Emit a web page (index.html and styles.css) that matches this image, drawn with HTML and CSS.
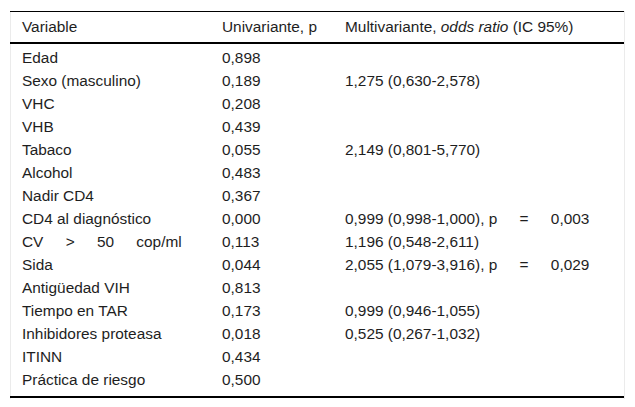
FILE: index.html
```html
<!DOCTYPE html>
<html lang="es">
<head>
<meta charset="utf-8">
<title>Tabla</title>
<link rel="stylesheet" href="styles.css">
</head>
<body>
<div class="wrap">
<table class="tbl">
<thead>
<tr><th>Variable</th><th>Univariante, p</th><th>Multivariante, <em>odds ratio</em> (IC 95%)</th></tr>
</thead>
<tbody>
<tr class="first"><td>Edad</td><td>0,898</td><td></td></tr>
<tr><td>Sexo (masculino)</td><td>0,189</td><td>1,275 (0,630-2,578)</td></tr>
<tr><td>VHC</td><td>0,208</td><td></td></tr>
<tr><td>VHB</td><td>0,439</td><td></td></tr>
<tr><td>Tabaco</td><td>0,055</td><td>2,149 (0,801-5,770)</td></tr>
<tr><td>Alcohol</td><td>0,483</td><td></td></tr>
<tr><td>Nadir CD4</td><td>0,367</td><td></td></tr>
<tr><td>CD4 al diagnóstico</td><td>0,000</td><td>0,999 (0,998-1,000), <span class="wide">p = 0,003</span></td></tr>
<tr><td><span class="wide">CV &gt; 50 cop/ml</span></td><td>0,113</td><td>1,196 (0,548-2,611)</td></tr>
<tr><td>Sida</td><td>0,044</td><td>2,055 (1,079-3,916), <span class="wide">p = 0,029</span></td></tr>
<tr><td>Antigüedad VIH</td><td>0,813</td><td></td></tr>
<tr><td>Tiempo en TAR</td><td>0,173</td><td>0,999 (0,946-1,055)</td></tr>
<tr><td>Inhibidores proteasa</td><td>0,018</td><td>0,525 (0,267-1,032)</td></tr>
<tr><td>ITINN</td><td>0,434</td><td></td></tr>
<tr class="last"><td>Práctica de riesgo</td><td>0,500</td><td></td></tr>
</tbody>
</table>
</div>
</body>
</html>
```

FILE: styles.css
```css
html, body {
  margin: 0;
  padding: 0;
  background: #ffffff;
}
body {
  font-family: "Liberation Sans", Arial, sans-serif;
  font-size: 15.4px;
  color: #1e1e1e;
}
.wrap {
  margin: 11px 10px 0 10px;
  width: 613px;
  border-left: 1px solid #ebebeb;
  border-right: 1px solid #ebebeb;
  padding-bottom: 1px;
}
.tbl {
  width: 614px;
  margin-left: -1px;
  border-collapse: collapse;
  table-layout: fixed;
  border-top: 1px solid #000;
  border-bottom: 2px solid #000;
}
.tbl th {
  font-weight: normal;
  text-align: left;
  height: 30px;
  padding: 0 0 0 12px;
  line-height: 30px;
  border-bottom: 2px solid #000;
  vertical-align: middle;
  white-space: nowrap;
}
.tbl td {
  padding: 0 0 0 12px;
  line-height: 23px;
  height: 23px;
  vertical-align: middle;
  white-space: nowrap;
}
.tbl th:nth-child(1) {
  width: 188px;
}
.tbl th:nth-child(2) {
  width: 111px;
}
.tbl em {
  font-style: italic;
}
.tbl tr.first td {
  padding-top: 2px;
}
.tbl tr.last td {
  padding-bottom: 5px;
}
.wide {
  word-spacing: 18px;
}
```
